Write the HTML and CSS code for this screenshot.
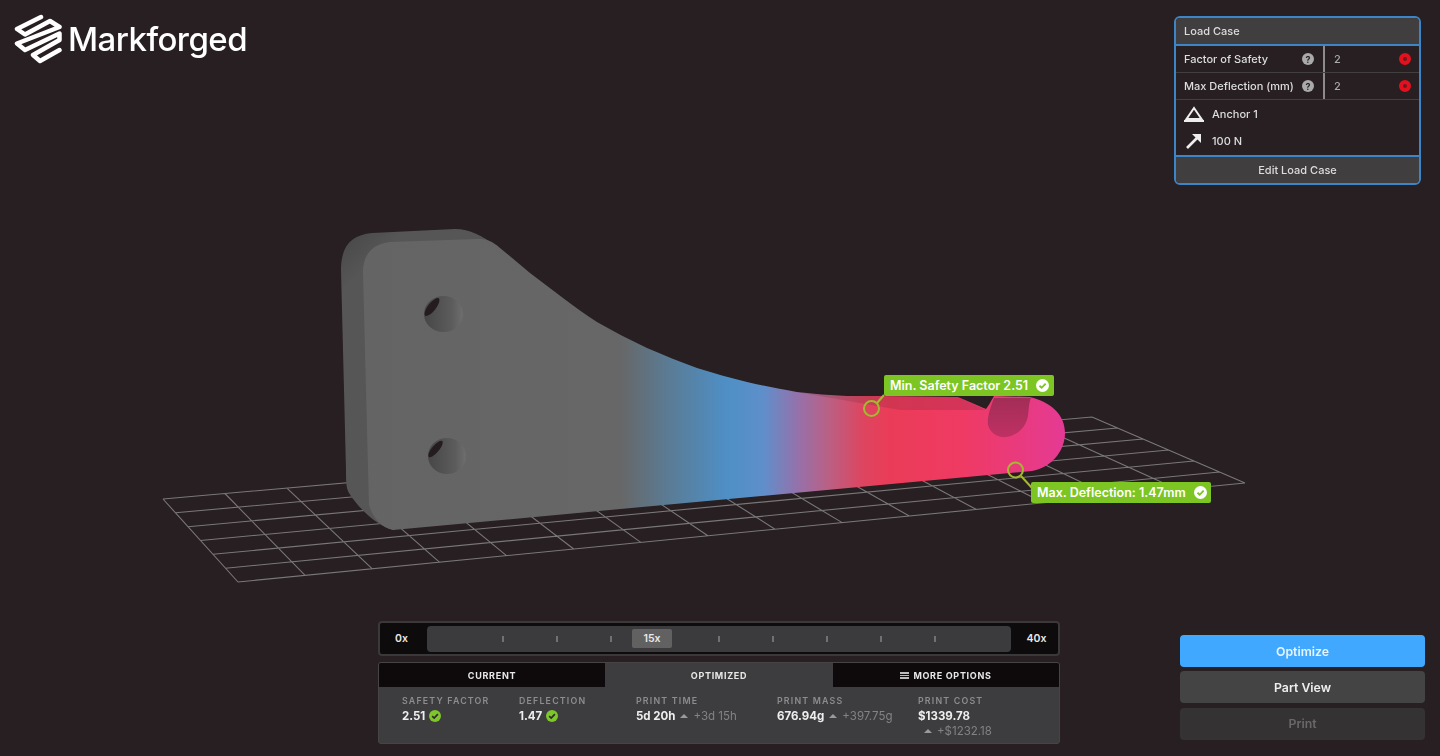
FILE: index.html
```html
<!DOCTYPE html>
<html lang="en">
<head>
<meta charset="utf-8">
<title>Markforged</title>
<link rel="stylesheet" href="styles.css">
</head>
<body>
<svg width="0" height="0" class="defs">
  <defs>
    <symbol id="ok" viewBox="0 0 12 12">
      <circle cx="6" cy="6" r="6" fill="currentColor"/>
      <path d="M3.200 6.200 5.200 8.100 8.900 4.200" fill="none" class="ok-mark" stroke-width="1.700"/>
    </symbol>
  </defs>
</svg>
<div class="app">
  <div class="scene">
    <svg class="scene-svg" viewBox="0 0 1440 756" width="1440" height="756">
      <defs>
        <linearGradient id="heat" gradientUnits="userSpaceOnUse" x1="360" y1="0" x2="1065" y2="0">
          <stop offset="0" stop-color="#646464"/>
          <stop offset="0.37" stop-color="#676767"/>
          <stop offset="0.44" stop-color="#5a7c96"/>
          <stop offset="0.52" stop-color="#4e8fc6"/>
          <stop offset="0.572" stop-color="#5f8fcb"/>
          <stop offset="0.62" stop-color="#9472ab"/>
          <stop offset="0.667" stop-color="#bc5f82"/>
          <stop offset="0.713" stop-color="#dd4560"/>
          <stop offset="0.75" stop-color="#ea3c58"/>
          <stop offset="0.85" stop-color="#ef3a62"/>
          <stop offset="1" stop-color="#e53a94"/>
        </linearGradient>
        <linearGradient id="side" gradientUnits="userSpaceOnUse" x1="341" y1="230" x2="372" y2="262">
          <stop offset="0" stop-color="#464646"/>
          <stop offset="1" stop-color="#565656"/>
        </linearGradient>
        <linearGradient id="hole" gradientUnits="userSpaceOnUse" x1="424" y1="0" x2="464" y2="0">
          <stop offset="0" stop-color="#474747"/>
          <stop offset="0.7" stop-color="#5c5c5c"/>
          <stop offset="1" stop-color="#707070"/>
        </linearGradient>
        <linearGradient id="hole2" gradientUnits="userSpaceOnUse" x1="428" y1="0" x2="467" y2="0">
          <stop offset="0" stop-color="#474747"/>
          <stop offset="0.7" stop-color="#5c5c5c"/>
          <stop offset="1" stop-color="#707070"/>
        </linearGradient>
        <linearGradient id="slot" x1="0" y1="0" x2="0" y2="1">
          <stop offset="0" stop-color="#a32d56"/>
          <stop offset="1" stop-color="#bf3163"/>
        </linearGradient>
      </defs>
      <path class="grid" d="M163 499 238 582M224.900 493.500 305.100 575.400M286.900 488.100 372.300 568.800M348.800 482.600 439.400 562.200M410.700 477.100 506.500 555.600M472.700 471.700 573.700 549M534.600 466.200 640.800 542.400M596.500 460.700 707.900 535.800M658.400 455.200 775 529.200M720.400 449.800 842.200 522.600M782.300 444.300 909.300 516M844.200 438.800 976.400 509.400M906.200 433.400 1043.600 502.800M968.100 427.900 1110.700 496.200M1030 422.400 1177.800 489.600M1092 417 1245 483M163 499 1092 417M175.500 512.800 1117.500 428M188 526.700 1143 439M200.500 540.500 1168.500 450M213 554.300 1194 461M225.500 568.200 1219.500 472M238 582 1245 483"/>
      <path fill="url(#side)" d="M341 270C341 245 352 235 372 233L455 229C470 229 482 236 497 246L400 300 395 530C378 527 360 510 349 493 346 488 346 480 346 470Z"/>
      <path fill="url(#heat)" d="M363 272C363 255 372 244 390 242L478 239C487 239 492 241 500 248 510 256 520 265 530 273 541 281 552 290 563 298 574 306 586 315 597 322 613 331 630 340 647 348 664 355 680 362 697 368 714 373 730 378 747 382 764 386 780 389 797 392 814 394 830 395 847 396L880 396 958 397 984 408 993 396 1030 397C1050 402 1065 414 1065 433 1065 452 1050 468 1032 471L393 530C380 527 373 517 369 505Z"/>
      <path fill="#3a1420" opacity="0.14" d="M785 390 880 396 958 397 986 410 900 410Z"/>
      <path fill="url(#slot)" d="M994 398C990 408 987 418 988 425 990 433 998 438 1006 437 1016 436 1026 428 1028 416 1029 408 1029 402 1031 398Z"/>
      <path class="bg-fill" d="M958 396 994 396C991 401 989 405 986 409Z"/>
      <ellipse class="hole-a" cx="443.500" cy="314" rx="19.500" ry="18"/>
      <ellipse class="hole-dark" cx="432" cy="307" rx="11" ry="4" transform="rotate(-52 432 307)"/>
      <ellipse class="hole-b" cx="447" cy="456" rx="19" ry="18"/>
      <ellipse class="hole-dark" cx="435.500" cy="449" rx="10.500" ry="3.500" transform="rotate(-50 435.500 449)"/>
      <g class="pin">
        <circle cx="871.500" cy="408.500" r="7.500"/>
        <path d="M877 403 884 395"/>
        <circle cx="1015.500" cy="470" r="7.500"/>
        <path d="M1021 476 1032 488"/>
      </g>
    </svg>
    <div class="tag tag-safety">Min. Safety Factor 2.51 <svg class="tag-ok"><use href="#ok"/></svg></div>
    <div class="tag tag-deflection">Max. Deflection: 1.47mm <svg class="tag-ok"><use href="#ok"/></svg></div>
  </div>

  <header class="top">
    <div class="brand">
      <svg class="brand-mark" viewBox="0 0 48 50" width="48" height="50">
        <path d="M27 3 3 15 11 20.500 36 7 45.500 13 3 29.500 11 36 45.500 19.500 45.500 26 19 41 26 47 45.500 36" fill="none" stroke="#fff" stroke-width="4.500" stroke-linejoin="round" stroke-linecap="round"/>
      </svg>
      <span class="brand-name">Markforged</span>
    </div>
    <section class="load">
      <div class="load-head">Load Case</div>
      <div class="load-row">
        <div class="load-key"><span>Factor of Safety</span><span class="help">?</span></div>
        <div class="load-val"><span>2</span><span class="clear"></span></div>
      </div>
      <div class="load-row">
        <div class="load-key"><span>Max Deflection (mm)</span><span class="help">?</span></div>
        <div class="load-val"><span>2</span><span class="clear"></span></div>
      </div>
      <div class="load-item">
        <svg viewBox="0 0 20 16" width="20" height="16"><path d="M10 2 17.500 13H2.500Z" fill="none" stroke="#eee" stroke-width="2"/><path d="M0 15H20" stroke="#eee" stroke-width="2"/></svg>
        <span>Anchor 1</span>
      </div>
      <div class="load-item">
        <svg viewBox="0 0 20 16" width="20" height="16"><path d="M3 15 14 4" stroke="#eee" stroke-width="2.600" fill="none"/><path d="M8 1H17V10Z" fill="#eee"/></svg>
        <span>100 N</span>
      </div>
      <div class="load-edit">Edit Load Case</div>
    </section>
  </header>

  <footer class="bottom">
    <div class="dock">
      <div class="slider">
        <span class="slider-end slider-min">0x</span>
        <div class="track">
          <i class="tick"></i><i class="tick"></i><i class="tick"></i>
          <span class="thumb">15x</span>
          <i class="tick tick-after"></i><i class="tick"></i><i class="tick"></i><i class="tick"></i><i class="tick"></i>
        </div>
        <span class="slider-end slider-max">40x</span>
      </div>
      <div class="stats">
        <div class="tabs">
          <div class="tab">CURRENT</div>
          <div class="tab tab-on">OPTIMIZED</div>
          <div class="tab"><span class="burger"></span>MORE OPTIONS</div>
        </div>
        <div class="figures">
          <div class="figure">
            <div class="fig-label">SAFETY FACTOR</div>
            <div class="fig-value">2.51 <svg class="fig-ok"><use href="#ok"/></svg></div>
          </div>
          <div class="figure">
            <div class="fig-label">DEFLECTION</div>
            <div class="fig-value">1.47 <svg class="fig-ok"><use href="#ok"/></svg></div>
          </div>
          <div class="figure">
            <div class="fig-label">PRINT TIME</div>
            <div class="fig-value">5d 20h <i class="caret"></i> <span class="delta">+3d 15h</span></div>
          </div>
          <div class="figure">
            <div class="fig-label">PRINT MASS</div>
            <div class="fig-value">676.94g <i class="caret"></i> <span class="delta">+397.75g</span></div>
          </div>
          <div class="figure">
            <div class="fig-label">PRINT COST</div>
            <div class="fig-value">$1339.78</div>
            <div class="fig-extra"><i class="caret"></i> <span class="delta">+$1232.18</span></div>
          </div>
        </div>
      </div>
    </div>
    <div class="actions">
      <button class="btn btn-primary">Optimize</button>
      <button class="btn btn-secondary">Part View</button>
      <button class="btn btn-off">Print</button>
    </div>
  </footer>
</div>
</body>
</html>
```
FILE: styles.css
```css
* { box-sizing: border-box; }
html, body { margin: 0; height: 100%; background: #271f21; overflow: hidden; }
body { font-family: Inter, "Liberation Sans", sans-serif; color: #e8e8e8; }
.defs { position: absolute; }
.ok-mark { stroke: var(--mark, #fff); }
.app { position: relative; height: 756px; display: flex; flex-direction: column; justify-content: space-between; filter: blur(0.45px); }
.scene { position: absolute; inset: 0; }
.scene-svg { display: block; }
.bg-fill { fill: #271f21; }
.grid { fill: none; stroke: #7a7778; stroke-width: 1.100; }
.hole-a { fill: url(#hole); }
.hole-b { fill: url(#hole2); }
.hole-dark { fill: #241c1e; }
.pin circle, .pin path { fill: none; stroke: #a4b830; stroke-width: 2; }

.tag { position: absolute; height: 21px; display: flex; align-items: center; gap: 8px; padding: 0 6px; background: #7cc522; color: #fff; font-size: 12.500px; font-weight: 600; border-radius: 2px; white-space: nowrap; --mark: #7cc522; }
.tag-safety { left: 884px; top: 375px; width: 170px; }
.tag-deflection { left: 1031px; top: 482px; width: 180px; }
.tag-ok { width: 13px; height: 13px; flex: none; color: #fff; }

.top { position: relative; display: flex; justify-content: space-between; align-items: flex-start; padding: 16px 19px 0 14px; }
.brand { display: flex; align-items: center; gap: 6px; margin-top: -2px; }
.brand-mark { display: block; }
.brand-name { font-size: 33px; font-weight: 500; color: #fff; letter-spacing: -0.550px; }

.load { width: 247px; height: 169px; border: 2px solid #3c85c8; border-radius: 6px; background: #271f21; font-size: 11px; font-weight: 500; color: #ddd; overflow: hidden; }
.load-head { height: 28px; padding-left: 8px; display: flex; align-items: center; background: #403e3f; border-bottom: 2px solid #3c85c8; }
.load-row { height: 27px; display: flex; border-bottom: 1px solid #423f40; }
.load-key { width: 149px; padding: 0 9px 0 8px; display: flex; align-items: center; justify-content: space-between; white-space: nowrap; border-right: 2px solid #8d8b8c; }
.load-val { flex: 1; padding: 0 8px 0 9px; display: flex; align-items: center; justify-content: space-between; color: #aaa; }
.help { width: 12px; height: 12px; border-radius: 50%; background: #aaa; color: #2a2526; font-size: 9px; font-weight: 700; display: flex; align-items: center; justify-content: center; }
.clear { width: 12px; height: 12px; border-radius: 50%; border: 4px solid #e4101e; background: #6b1a20; }
.load-item { height: 27.500px; display: flex; align-items: center; gap: 8px; padding-left: 8px; }
.load-edit { height: 28px; display: flex; align-items: center; justify-content: center; background: #403e3f; border-top: 2px solid #3c85c8; }

.bottom { position: relative; display: flex; align-items: flex-end; padding: 0 15px 12px 378px; gap: 120px; }
.dock { width: 682px; display: flex; flex-direction: column; gap: 6px; }
.slider { height: 35px; display: flex; align-items: center; background: #0e0b0c; border: 2px solid #3b3839; border-radius: 4px; padding: 2px 0; font-size: 10.500px; font-weight: 600; }
.slider-end { flex: 1; text-align: center; }
.slider-min { padding-right: 4px; }
.slider-max { padding-left: 4px; }
.track { position: relative; width: 584px; height: 26px; flex: none; display: flex; align-items: center; background: #3b3a3c; border-radius: 4px; padding-left: 75px; }
.tick { width: 2px; height: 6px; background: #717073; margin-right: 52px; flex: none; }
.tick-after { margin-left: 46px; }
.thumb { flex: none; width: 40px; height: 19px; margin-left: -32px; display: flex; align-items: center; justify-content: center; background: #626162; border-radius: 2px; }

.stats { height: 82px; background: #3d3c3e; border: 1px solid #464445; border-radius: 3px; overflow: hidden; }
.tabs { display: grid; grid-template-columns: 226px 228px 1fr; height: 24px; }
.tab { display: flex; align-items: center; justify-content: center; background: #0e0a0c; font-size: 9px; font-weight: 700; letter-spacing: 0.700px; }
.tab-on { background: #3d3c3e; }
.burger { width: 9px; height: 7px; margin-right: 4px; background: linear-gradient(#bbb 0 2px, transparent 2px 2.500px, #bbb 2.500px 4.500px, transparent 4.500px 5px, #bbb 5px 7px); }
.figures { display: grid; grid-template-columns: 117px 117px 141px 141px 1fr; padding: 5px 0 0 23px; }
.fig-label { font-size: 8.800px; font-weight: 600; letter-spacing: 1.200px; color: #8d8c8e; white-space: nowrap; line-height: 11px; margin-top: 3px; }
.fig-value { display: flex; align-items: center; gap: 4px; font-size: 11.500px; font-weight: 700; color: #eee; height: 16px; margin-top: 2px; white-space: nowrap; --mark: #2c2c2c; }
.fig-extra { display: flex; align-items: center; gap: 4px; padding-left: 5px; height: 14px; font-size: 11.500px; }
.fig-ok { width: 12px; height: 12px; flex: none; color: #7ec62a; }
.caret { width: 0; height: 0; border-left: 4px solid transparent; border-right: 4px solid transparent; border-bottom: 4px solid #9a999b; margin: 0 1px; }
.delta { font-weight: 400; color: #838284; }

.actions { width: 245px; display: flex; flex-direction: column; gap: 4px; margin-bottom: 4px; }
.btn { height: 32px; border: 0; border-radius: 4px; font-family: inherit; font-size: 12.300px; font-weight: 600; padding: 0; }
.btn-primary { background: #40a9ff; color: #e6f4ff; }
.btn-secondary { background: #454444; color: #eee; }
.btn-off { background: #343233; color: #6a6869; margin-top: 1px; padding-bottom: 2px; }
```
